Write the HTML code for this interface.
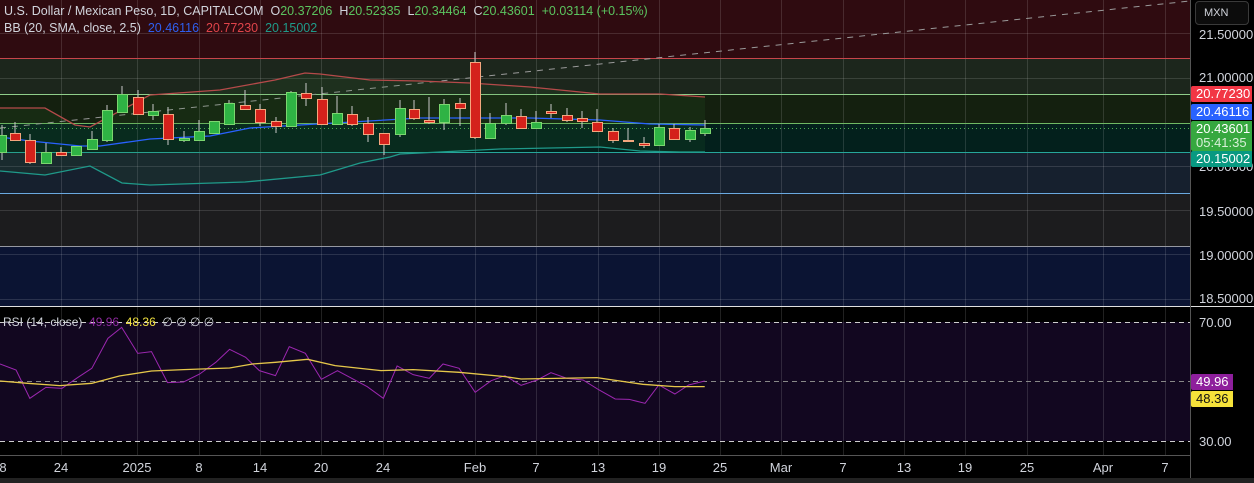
<!DOCTYPE html>
<html><head><meta charset="utf-8"><style>
html,body{margin:0;padding:0;background:#000;width:1254px;height:483px;overflow:hidden;font-family:"Liberation Sans",sans-serif}
.t{position:absolute;font-size:12.5px;color:#d1d4dc;white-space:nowrap}
.ax{position:absolute;left:1199px;font-size:13px;color:#d1d4dc}
.lb{position:absolute;left:1191px;width:61px;height:16px;font-size:13px;color:#fff;padding-left:5px;box-sizing:border-box;line-height:16px;border-radius:2px 0 0 2px}
.tx{position:absolute;top:460px;font-size:13px;color:#d1d4dc;transform:translateX(-50%)}
</style></head><body>
<svg width="1254" height="483" style="position:absolute;left:0;top:0">
<rect x="0" y="0" width="1190" height="58" fill="#2f0b10"/>
<rect x="0" y="58" width="1190" height="36" fill="#1c261c"/>
<rect x="0" y="94" width="1190" height="29" fill="#14200f"/>
<rect x="0" y="123" width="1190" height="29" fill="#03201c"/>
<rect x="0" y="152" width="1190" height="41" fill="#16202e"/>
<rect x="0" y="193" width="1190" height="53" fill="#1c1c1e"/>
<rect x="0" y="246" width="1190" height="60" fill="#0b1433"/>
<rect x="0" y="322" width="1190" height="119" fill="#120720"/>
<g stroke="#ffffff" stroke-opacity="0.13" stroke-width="1">
<line x1="0" y1="33.5" x2="1190" y2="33.5"/><line x1="0" y1="78.5" x2="1190" y2="78.5"/><line x1="0" y1="166.5" x2="1190" y2="166.5"/><line x1="0" y1="210.5" x2="1190" y2="210.5"/><line x1="0" y1="254.5" x2="1190" y2="254.5"/><line x1="0" y1="299.5" x2="1190" y2="299.5"/>
<line x1="61.5" y1="0" x2="61.5" y2="455"/><line x1="137.5" y1="0" x2="137.5" y2="455"/><line x1="199.5" y1="0" x2="199.5" y2="455"/><line x1="260.5" y1="0" x2="260.5" y2="455"/><line x1="321.5" y1="0" x2="321.5" y2="455"/><line x1="383.5" y1="0" x2="383.5" y2="455"/><line x1="475.5" y1="0" x2="475.5" y2="455"/><line x1="536.5" y1="0" x2="536.5" y2="455"/><line x1="598.5" y1="0" x2="598.5" y2="455"/><line x1="659.5" y1="0" x2="659.5" y2="455"/><line x1="720.5" y1="0" x2="720.5" y2="455"/><line x1="781.5" y1="0" x2="781.5" y2="455"/><line x1="843.5" y1="0" x2="843.5" y2="455"/><line x1="904.5" y1="0" x2="904.5" y2="455"/><line x1="965.5" y1="0" x2="965.5" y2="455"/><line x1="1027.5" y1="0" x2="1027.5" y2="455"/><line x1="1103.5" y1="0" x2="1103.5" y2="455"/><line x1="1165.5" y1="0" x2="1165.5" y2="455"/>
</g>
<line x1="0" y1="58.5" x2="1190" y2="58.5" stroke="#c8454b"/>
<line x1="0" y1="94.5" x2="1190" y2="94.5" stroke="#8fce8a"/>
<line x1="0" y1="123.5" x2="1190" y2="123.5" stroke="#6fb863"/>
<line x1="0" y1="152.5" x2="1190" y2="152.5" stroke="#26a69a"/>
<line x1="0" y1="193.5" x2="1190" y2="193.5" stroke="#6aa9e0"/>
<line x1="0" y1="246.5" x2="1190" y2="246.5" stroke="#9598a1"/>
<line x1="0" y1="128.5" x2="1190" y2="128.5" stroke="#4caf50" stroke-dasharray="1 3"/>
<line x1="0" y1="128" x2="1190" y2="1" stroke="#9a9a9a" stroke-dasharray="6 6"/>
<polygon fill="#2e7d32" fill-opacity="0.12" points="0,108 45,108 75,125 90,127 150,95 220,90 275,80 305,73 320,74 370,80 420,81 470,83 530,87 600,94 660,94 705,97 705,152 680,152 640,151 600,147 500,149 400,154 390,157 360,163 320,175 245,182 150,185 122,183 90,166 45,175 0,171"/>
<polyline fill="none" stroke="#b54a4a" stroke-width="1.3" points="0,108 45,108 75,125 90,127 150,95 220,90 275,80 305,73 320,74 370,80 420,81 470,83 530,87 600,94 660,94 705,97"/>
<polyline fill="none" stroke="#2962ff" stroke-width="1.3" points="0,137 30,141 80,146 100,146 150,139 210,136 250,128 300,125 420,118 450,118 530,118 600,120 650,124 705,125"/>
<polyline fill="none" stroke="#1f9a8a" stroke-width="1.3" points="0,171 45,175 90,166 122,183 150,185 245,182 320,175 360,163 390,157 400,154 500,149 600,147 640,151 680,152 705,152"/>
<g stroke-width="1">
<g stroke="#c8c8c8">
<line x1="2" y1="125" x2="2" y2="160"/><line x1="15" y1="122" x2="15" y2="140"/><line x1="30" y1="134" x2="30" y2="164"/><line x1="46" y1="143" x2="46" y2="164"/><line x1="61" y1="147" x2="61" y2="155"/><line x1="76" y1="146" x2="76" y2="155"/><line x1="92" y1="131" x2="92" y2="149"/><line x1="107" y1="105" x2="107" y2="142"/><line x1="122" y1="86" x2="122" y2="112"/><line x1="138" y1="90" x2="138" y2="114"/><line x1="153" y1="104" x2="153" y2="120"/><line x1="168" y1="107" x2="168" y2="145"/><line x1="184" y1="131" x2="184" y2="142"/><line x1="199" y1="120" x2="199" y2="140"/><line x1="214" y1="121" x2="214" y2="133"/><line x1="229" y1="100" x2="229" y2="124"/><line x1="245" y1="90" x2="245" y2="109"/><line x1="260" y1="104" x2="260" y2="126"/><line x1="276" y1="117" x2="276" y2="133"/><line x1="291" y1="91" x2="291" y2="127"/><line x1="306" y1="83" x2="306" y2="106"/><line x1="322" y1="87" x2="322" y2="124"/><line x1="337" y1="96" x2="337" y2="124"/><line x1="352" y1="106" x2="352" y2="126"/><line x1="368" y1="117" x2="368" y2="142"/><line x1="384" y1="133" x2="384" y2="155"/><line x1="400" y1="100" x2="400" y2="137"/><line x1="414" y1="100" x2="414" y2="120"/><line x1="429" y1="97" x2="429" y2="124"/><line x1="444" y1="99" x2="444" y2="130"/><line x1="460" y1="98" x2="460" y2="126"/><line x1="475" y1="52" x2="475" y2="139"/><line x1="490" y1="113" x2="490" y2="138"/><line x1="506" y1="103" x2="506" y2="125"/><line x1="521" y1="109" x2="521" y2="128"/><line x1="536" y1="111" x2="536" y2="128"/><line x1="551" y1="104" x2="551" y2="118"/><line x1="567" y1="108" x2="567" y2="122"/><line x1="582" y1="111" x2="582" y2="128"/><line x1="597" y1="109" x2="597" y2="131"/><line x1="613" y1="128" x2="613" y2="143"/><line x1="628" y1="128" x2="628" y2="142"/><line x1="644" y1="137" x2="644" y2="148"/><line x1="659" y1="124" x2="659" y2="146"/><line x1="674" y1="124" x2="674" y2="139"/><line x1="690" y1="127" x2="690" y2="142"/><line x1="705" y1="120" x2="705" y2="136"/>
</g>
<g fill="#2fb344" stroke="#7bd66f">
<rect x="-3.5" y="135.5" width="10" height="17"/><rect x="41.5" y="152.5" width="10" height="11"/><rect x="71.5" y="146.5" width="10" height="9"/><rect x="87.5" y="139.5" width="10" height="10"/><rect x="102.5" y="110.5" width="10" height="30"/><rect x="117.5" y="94.5" width="10" height="18"/><rect x="148.5" y="111.5" width="10" height="4"/><rect x="179.5" y="138.5" width="10" height="2"/><rect x="194.5" y="131.5" width="10" height="9"/><rect x="209.5" y="121.5" width="10" height="12"/><rect x="224.5" y="103.5" width="10" height="21"/><rect x="286.5" y="92.5" width="10" height="34"/><rect x="332.5" y="113.5" width="10" height="11"/><rect x="395.5" y="108.5" width="10" height="26"/><rect x="439.5" y="104.5" width="10" height="18"/><rect x="485.5" y="123.5" width="10" height="15"/><rect x="501.5" y="115.5" width="10" height="8"/><rect x="531.5" y="122.5" width="10" height="6"/><rect x="654.5" y="127.5" width="10" height="18"/><rect x="685.5" y="130.5" width="10" height="9"/><rect x="700.5" y="128.5" width="10" height="5"/>
</g>
<g fill="#d4211b" stroke="#f4a67e">
<rect x="10.5" y="133.5" width="10" height="7"/><rect x="25.5" y="140.5" width="10" height="22"/><rect x="56.5" y="152.5" width="10" height="3"/><rect x="133.5" y="97.5" width="10" height="17"/><rect x="163.5" y="114.5" width="10" height="25"/><rect x="240.5" y="105.5" width="10" height="4"/><rect x="255.5" y="109.5" width="10" height="13"/><rect x="271.5" y="121.5" width="10" height="5"/><rect x="301.5" y="93.5" width="10" height="5"/><rect x="317.5" y="99.5" width="10" height="25"/><rect x="347.5" y="114.5" width="10" height="10"/><rect x="363.5" y="123.5" width="10" height="11"/><rect x="379.5" y="133.5" width="10" height="11"/><rect x="409.5" y="109.5" width="10" height="9"/><rect x="424.5" y="120.5" width="10" height="2"/><rect x="455.5" y="103.5" width="10" height="5"/><rect x="470.5" y="62.5" width="10" height="75"/><rect x="516.5" y="116.5" width="10" height="12"/><rect x="546.5" y="111.5" width="10" height="2"/><rect x="562.5" y="115.5" width="10" height="5"/><rect x="577.5" y="118.5" width="10" height="3"/><rect x="592.5" y="122.5" width="10" height="9"/><rect x="608.5" y="131.5" width="10" height="9"/><rect x="623.5" y="140.5" width="10" height="1"/><rect x="639.5" y="143.5" width="10" height="2"/><rect x="669.5" y="128.5" width="10" height="11"/>
</g>
</g>
<line x1="0" y1="306.5" x2="1254" y2="306.5" stroke="#e0e0e0"/>
<line x1="1190.5" y1="0" x2="1190.5" y2="483" stroke="#555"/>
<line x1="0" y1="455.5" x2="1190" y2="455.5" stroke="#555"/>
<rect x="0" y="478" width="1254" height="5" fill="#222"/>
<line x1="0" y1="322.5" x2="1190" y2="322.5" stroke="#cfcfcf" stroke-dasharray="5 4"/>
<line x1="0" y1="381.5" x2="1190" y2="381.5" stroke="#888" stroke-dasharray="5 4"/>
<line x1="0" y1="441.5" x2="1190" y2="441.5" stroke="#cfcfcf" stroke-dasharray="5 4"/>
<g transform="translate(0,300) scale(0.4591,0.3333)">
<polyline fill="none" stroke="#9c27b0" stroke-width="1" vector-effect="non-scaling-stroke" points="0,192 35,210 65,295 100,262 135,265 170,232 200,205 235,115 265,82 300,160 330,155 365,248 400,246 435,222 470,187 500,148 535,172 565,212 600,227 630,140 665,160 700,238 735,212 800,260 835,295 865,198 900,224 935,235 965,192 1000,205 1035,277 1070,242 1100,227 1135,256 1170,240 1200,218 1235,235 1270,240 1305,270 1340,297 1370,298 1405,310 1435,255 1470,282 1500,255 1535,243"/>
<polyline fill="none" stroke="#e6c84a" stroke-width="1.3" vector-effect="non-scaling-stroke" points="0,243 60,250 130,257 200,250 260,228 330,213 400,209 500,204 550,192 600,187 670,178 730,197 830,212 900,209 1000,217 1100,230 1135,237 1300,233 1400,253 1470,260 1535,260"/>
</g>
</svg>
<div class="t" style="left:4px;top:4px">U.S. Dollar / Mexican Peso, 1D, CAPITALCOM&nbsp; O<span style="color:#5bc45f">20.37206</span>&nbsp; H<span style="color:#5bc45f">20.52335</span>&nbsp; L<span style="color:#5bc45f">20.34464</span>&nbsp; C<span style="color:#5bc45f">20.43601</span>&nbsp; <span style="color:#5bc45f">+0.03114 (+0.15%)</span></div>
<div class="t" style="left:4px;top:21px">BB (20, SMA, close, 2.5)&nbsp; <span style="color:#2f5ff0">20.46116</span>&nbsp; <span style="color:#e0444a">20.77230</span>&nbsp; <span style="color:#1f9a8a">20.15002</span></div>
<div class="t" style="left:3px;top:315px;font-size:12px">RSI (14, close)&nbsp; <span style="color:#8e2aa0">49.96</span>&nbsp; <span style="color:#f0e040">48.36</span>&nbsp; ∅ ∅ ∅ ∅</div>
<div style="position:absolute;left:1195px;top:1px;width:54px;height:24px;border:1px solid #3a3a3a;border-radius:4px;background:#0c0c0c;box-sizing:border-box;color:#d1d4dc;font-size:11px;line-height:22px;padding-left:8px">MXN</div>
<div class="ax" style="top:27px">21.50000</div>
<div class="ax" style="top:70px">21.00000</div>
<div class="ax" style="top:159px">20.00000</div>
<div class="ax" style="top:204px">19.50000</div>
<div class="ax" style="top:248px">19.00000</div>
<div class="ax" style="top:291px">18.50000</div>
<div class="ax" style="top:315px">70.00</div>
<div class="ax" style="top:434px">30.00</div>
<div class="lb" style="top:86px;background:#f23645">20.77230</div>
<div class="lb" style="top:104px;background:#2962ff">20.46116</div>
<div class="lb" style="top:121px;height:30px;background:#36a83f;line-height:14px;padding-top:1px">20.43601<br><span style="color:#d8f0d8">05:41:35</span></div>
<div class="lb" style="top:151px;background:#089981">20.15002</div>
<div class="lb" style="top:374px;width:42px;background:#8e1f9c;padding-left:5px">49.96</div>
<div class="lb" style="top:391px;width:42px;background:#f5e23a;color:#111;padding-left:5px">48.36</div>
<div class="tx" style="left:3px">8</div><div class="tx" style="left:61px">24</div><div class="tx" style="left:137px">2025</div><div class="tx" style="left:199px">8</div><div class="tx" style="left:260px">14</div><div class="tx" style="left:321px">20</div><div class="tx" style="left:383px">24</div><div class="tx" style="left:475px">Feb</div><div class="tx" style="left:536px">7</div><div class="tx" style="left:598px">13</div><div class="tx" style="left:659px">19</div><div class="tx" style="left:720px">25</div><div class="tx" style="left:781px">Mar</div><div class="tx" style="left:843px">7</div><div class="tx" style="left:904px">13</div><div class="tx" style="left:965px">19</div><div class="tx" style="left:1027px">25</div><div class="tx" style="left:1103px">Apr</div><div class="tx" style="left:1165px">7</div>
</body></html>
